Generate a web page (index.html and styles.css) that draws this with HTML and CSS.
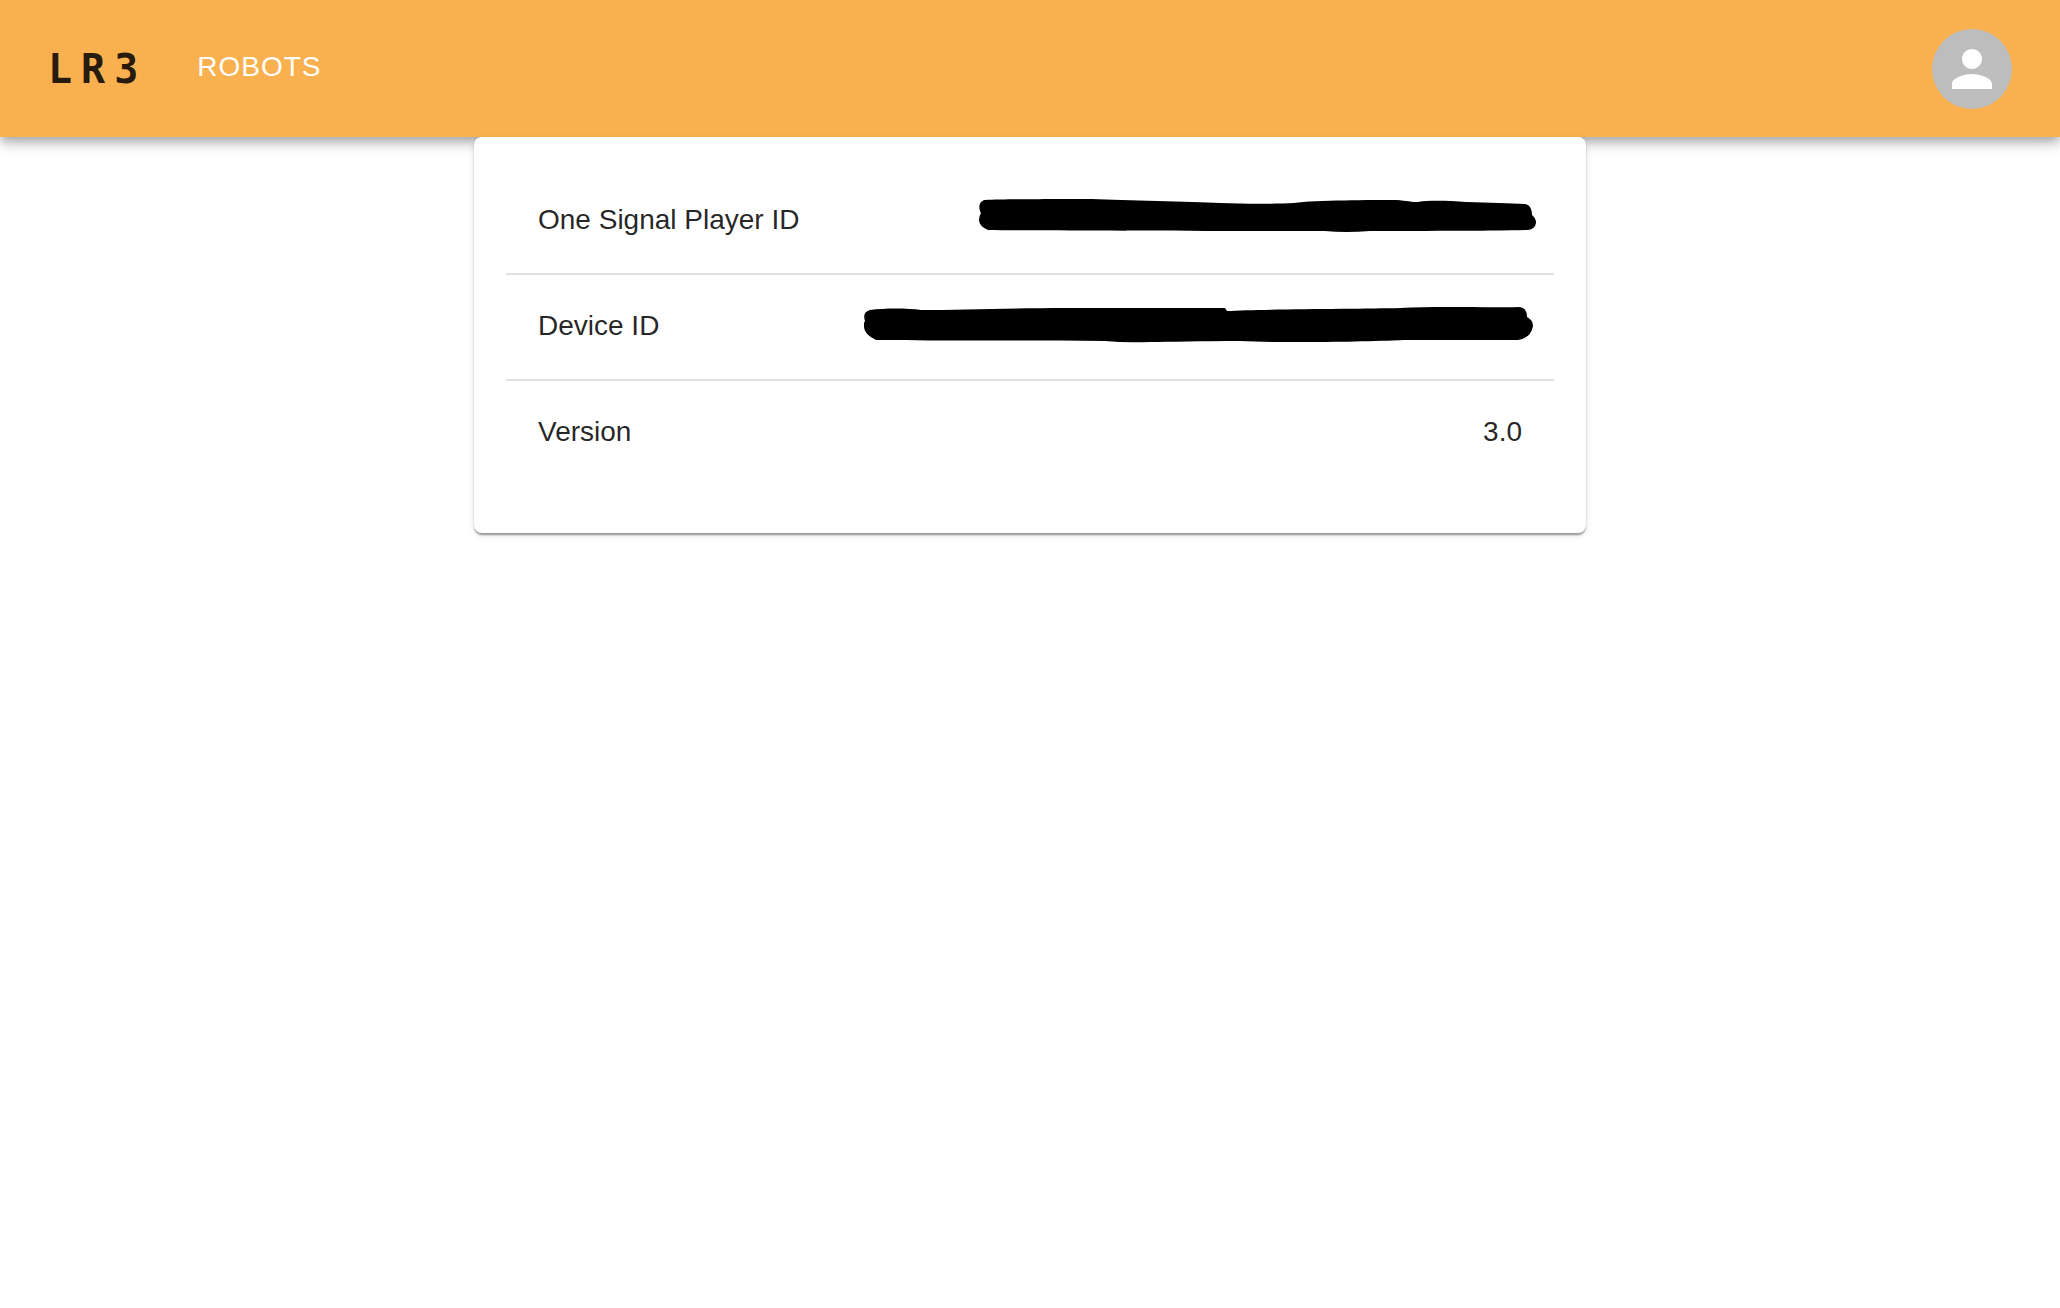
FILE: index.html
```html
<!DOCTYPE html>
<html lang="en">
<head>
<meta charset="utf-8">
<meta name="viewport" content="width=device-width, initial-scale=1">
<title>LR3</title>
<link rel="stylesheet" href="styles.css">
</head>
<body>
<header class="app-bar">
  <a class="brand" href="#">LR3</a>
  <nav class="nav"><a class="nav-link" href="#">ROBOTS</a></nav>
  <button class="avatar" type="button" aria-label="Account">
    <svg class="avatar-icon" viewBox="0 0 24 24" aria-hidden="true"><path d="M12 12c2.210 0 4-1.790 4-4s-1.790-4-4-4-4 1.790-4 4 1.790 4 4 4zm0 2c-2.670 0-8 1.340-8 4v2h16v-2c0-2.660-5.330-4-8-4z"/></svg>
  </button>
</header>
<main class="content">
  <dl class="card">
    <div class="row">
      <dt>One Signal Player ID</dt>
      <dd>
        <svg class="mask mask-player" viewBox="976 196 562 48" role="img" aria-label="Hidden">
          <path d="M985 200C1010 199 1075 199 1092 199C1125 200 1190 202 1220 203C1245 204 1275 204 1294 203C1315 200 1375 200 1392 200C1405 200 1408 202 1418 202C1430 200 1450 201 1466 202C1490 203 1510 203 1525 204C1530 205 1532 209 1532 215Q1536 218 1536 223Q1535 229 1528 230C1490 231 1410 231 1370 231Q1345 233 1325 231C1240 231 1050 231 988 230Q979 226 979 220Q979 216 981 213C978 208 979 201 985 200Z"/>
        </svg>
      </dd>
    </div>
    <div class="row">
      <dt>Device ID</dt>
      <dd>
        <svg class="mask mask-device" viewBox="862 302 676 48" role="img" aria-label="Hidden">
          <path d="M870 310C885 308 907 308 921 310C960 310 1010 308 1065 308H1225L1227 311C1260 309 1360 309 1400 308C1440 306 1490 308 1518 307Q1527 307 1527 317Q1533 320 1533 326Q1531 338 1518 340H1404C1360 342 1280 343 1240 341C1200 341 1170 342 1150 342Q1125 343 1105 341C1030 340 950 341 895 340L876 340Q864 334 864 327V323L865 321Q862 312 870 310Z"/>
        </svg>
      </dd>
    </div>
    <div class="row">
      <dt>Version</dt>
      <dd>3.0</dd>
    </div>
  </dl>
</main>
</body>
</html>
```
FILE: styles.css
```css
* {
  box-sizing: border-box;
}

body {
  margin: 0;
  background: #fff;
  color: rgba(0, 0, 0, 0.87);
  font-family: "Liberation Sans", Arial, sans-serif;
  font-size: 28px;
  line-height: 40px;
}

.app-bar {
  display: flex;
  align-items: center;
  padding: 29px 48px 28px;
  background: #f9b04f;
  box-shadow: 0 4px 8px -2px rgba(0, 0, 0, 0.2), 0 8px 10px rgba(0, 0, 0, 0.14), 0 2px 20px rgba(0, 0, 0, 0.12);
}

.brand {
  color: rgba(0, 0, 0, 0.87);
  font-family: "DejaVu Sans Mono", monospace;
  font-size: 40px;
  font-weight: 700;
  letter-spacing: 9px;
  text-decoration: none;
}

.nav {
  flex: 1;
  padding: 0 50px 4px;
}

.nav-link {
  color: #fff;
  letter-spacing: 1px;
  text-decoration: none;
}

.avatar {
  display: flex;
  align-items: center;
  justify-content: center;
  width: 80px;
  height: 80px;
  padding: 0;
  border: 0;
  border-radius: 50%;
  background: #bdbdbd;
  cursor: pointer;
}

.avatar-icon {
  width: 60px;
  height: 60px;
  fill: #fff;
}

.content {
  padding: 0 24px 24px;
}

.card {
  position: relative;
  max-width: 1112px;
  margin: 0 auto;
  padding: 32px 32px 48px;
  border-radius: 8px;
  background: #fff;
  box-shadow: 0 3px 2px -1px rgba(0, 0, 0, 0.25), 0 2px 2px rgba(0, 0, 0, 0.14), 0 2px 6px rgba(0, 0, 0, 0.12);
}

.row {
  display: flex;
  align-items: center;
  justify-content: space-between;
  padding: 31px 32px 33px;
}

.row + .row {
  border-top: 2px solid #e0e0e0;
}

dd {
  margin: 0;
}

.mask {
  display: block;
  height: 48px;
  margin: -4px -16px -4px 0;
}

.mask-player {
  width: 562px;
}

.mask-device {
  width: 676px;
}
```
